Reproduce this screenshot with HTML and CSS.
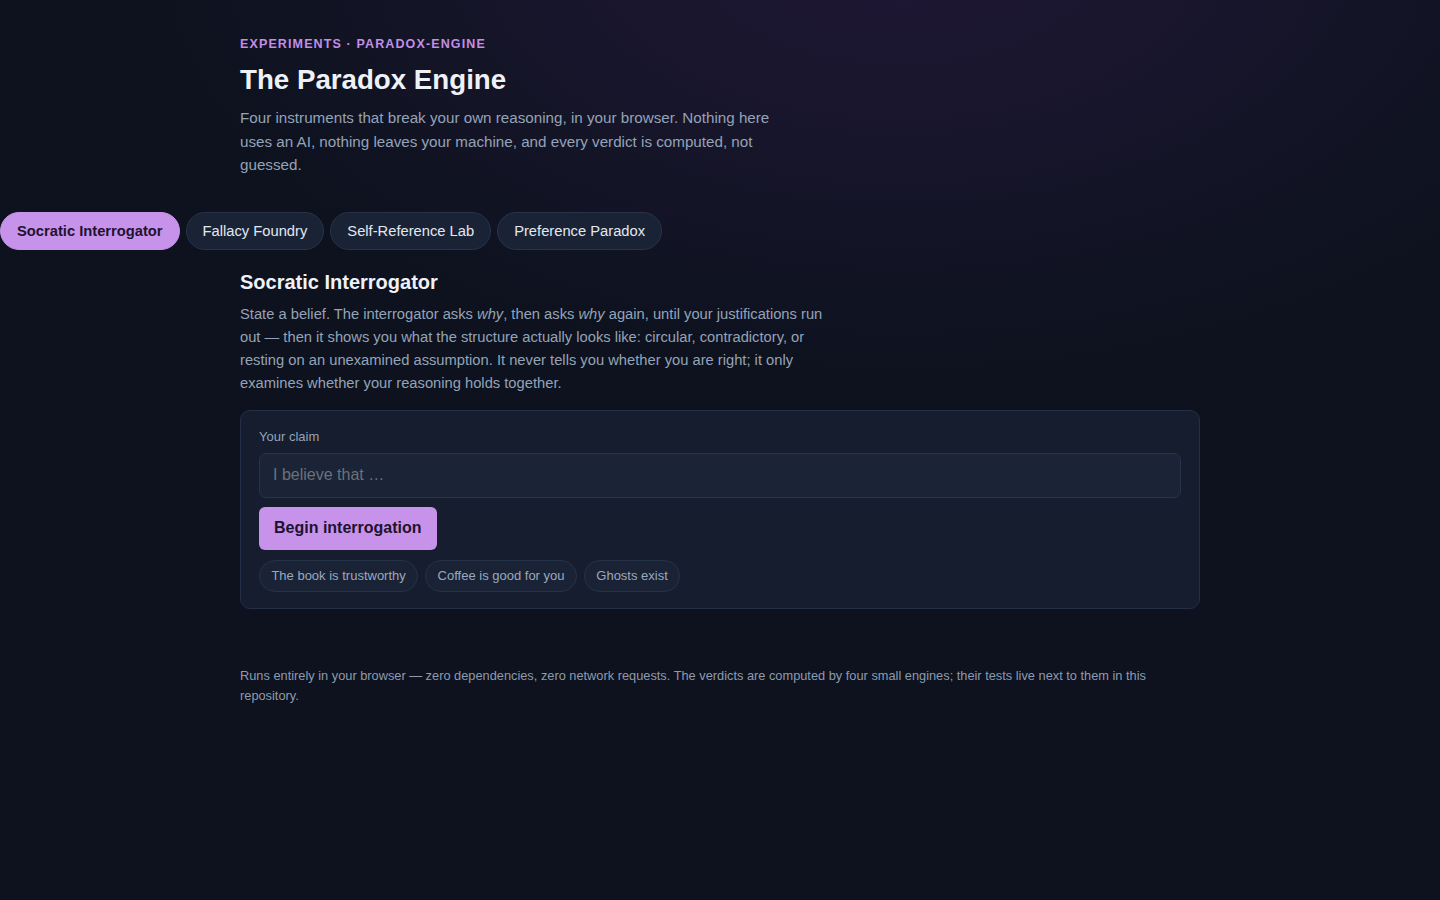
FILE: index.html
```html
<!DOCTYPE html>
<html lang="en">
<head>
<meta charset="utf-8">
<title>The Paradox Engine</title>
<link rel="stylesheet" href="styles.css">
</head>
<body>
<header class="wrap hero">
  <div class="eyebrow">Experiments · paradox-engine</div>
  <h1 class="title">The Paradox Engine</h1>
  <p class="lead">Four instruments that break your own reasoning, in your browser. Nothing here uses an AI, nothing leaves your machine, and every verdict is computed, not guessed.</p>
</header>
<nav class="tabs">
  <button class="tab active">Socratic Interrogator</button>
  <button class="tab">Fallacy Foundry</button>
  <button class="tab">Self-Reference Lab</button>
  <button class="tab">Preference Paradox</button>
</nav>
<main class="wrap">
  <h2 class="section-title">Socratic Interrogator</h2>
  <p class="section-desc">State a belief. The interrogator asks <em>why</em>, then asks <em>why</em> again, until your justifications run out — then it shows you what the structure actually looks like: circular, contradictory, or resting on an unexamined assumption. It never tells you whether you are right; it only examines whether your reasoning holds together.</p>
  <section class="card">
    <label class="label" for="claim">Your claim</label>
    <input id="claim" class="input" type="text" placeholder="I believe that …">
    <div class="actions"><button class="primary">Begin interrogation</button></div>
    <div class="chips">
      <button class="chip">The book is trustworthy</button>
      <button class="chip">Coffee is good for you</button>
      <button class="chip">Ghosts exist</button>
    </div>
  </section>
</main>
<footer class="wrap footer">
  <p>Runs entirely in your browser — zero dependencies, zero network requests. The verdicts are computed by four small engines; their tests live next to them in this repository.</p>
</footer>
</body>
</html>
```
FILE: styles.css
```css
* { box-sizing: border-box; }
html, body { margin: 0; padding: 0; }
body {
  min-height: 900px;
  background-color: #0d121e;
  background-image: radial-gradient(ellipse 760px 440px at 900px -60px, rgba(40, 26, 64, 0.7), rgba(13, 18, 30, 0) 100%);
  background-repeat: no-repeat;
  color: #e2e8f0;
  font-family: "Liberation Sans", Arial, Helvetica, sans-serif;
}
.wrap { width: 960px; margin: 0 auto; }
.hero { padding-top: 36px; }
.eyebrow {
  font-size: 12.5px;
  font-weight: 700;
  letter-spacing: 0.09em;
  text-transform: uppercase;
  color: #c38ee6;
  line-height: 16px;
}
.title {
  margin: 11px 0 0;
  font-size: 27.7px;
  line-height: 34px;
  font-weight: 700;
  color: #eef2f8;
}
.lead {
  margin: 9px 0 0;
  max-width: 560px;
  font-size: 15.2px;
  line-height: 23.5px;
  color: #94a3b8;
}
.tabs {
  display: flex;
  gap: 6px;
  margin-top: 35px;
}
.tab {
  height: 38px;
  padding: 0 16px;
  border-radius: 999px;
  border: 1px solid #28334a;
  background: #1a2335;
  color: #e2e8f0;
  font-family: "Liberation Sans", Arial, Helvetica, sans-serif;
  font-size: 14.72px;
  cursor: pointer;
}
.tab.active {
  background: #c792ea;
  border-color: #c792ea;
  color: #1d1330;
  font-weight: 700;
}
.section-title {
  margin: 20px 0 0;
  font-size: 20px;
  line-height: 24px;
  font-weight: 700;
  color: #eef2f8;
}
.section-desc {
  margin: 9px 0 0;
  max-width: 600px;
  font-size: 14.72px;
  line-height: 23px;
  color: #94a3b8;
}
.section-desc em { font-style: italic; }
.card {
  margin-top: 15px;
  padding: 18px 18px 16px;
  border: 1px solid #243047;
  border-radius: 10px;
  background: #151d2e;
}
.label {
  display: block;
  font-size: 13px;
  line-height: 16px;
  color: #94a3b8;
}
.input {
  display: block;
  width: 100%;
  height: 45px;
  margin-top: 8px;
  padding: 0 13px;
  border: 1px solid #28344c;
  border-radius: 7px;
  background: #1a2436;
  color: #e2e8f0;
  font-family: "Liberation Sans", Arial, Helvetica, sans-serif;
  font-size: 16px;
}
.input::placeholder { color: #6b717c; }
.actions { margin-top: 9px; }
.primary {
  height: 43px;
  padding: 0 15px;
  border: none;
  border-radius: 6px;
  background: #c792ea;
  color: #1d1330;
  font-family: "Liberation Sans", Arial, Helvetica, sans-serif;
  font-size: 16px;
  font-weight: 700;
  cursor: pointer;
}
.chips {
  display: flex;
  gap: 7px;
  margin-top: 10px;
}
.chip {
  height: 32px;
  padding: 0 11.4px;
  border: 1px solid #263248;
  border-radius: 999px;
  background: #1a2335;
  color: #9aa8bf;
  font-family: "Liberation Sans", Arial, Helvetica, sans-serif;
  font-size: 13px;
  cursor: pointer;
}
.footer { margin-top: 57px; }
.footer p {
  margin: 0;
  font-size: 12.8px;
  line-height: 20px;
  color: #8d9ab0;
}
```
